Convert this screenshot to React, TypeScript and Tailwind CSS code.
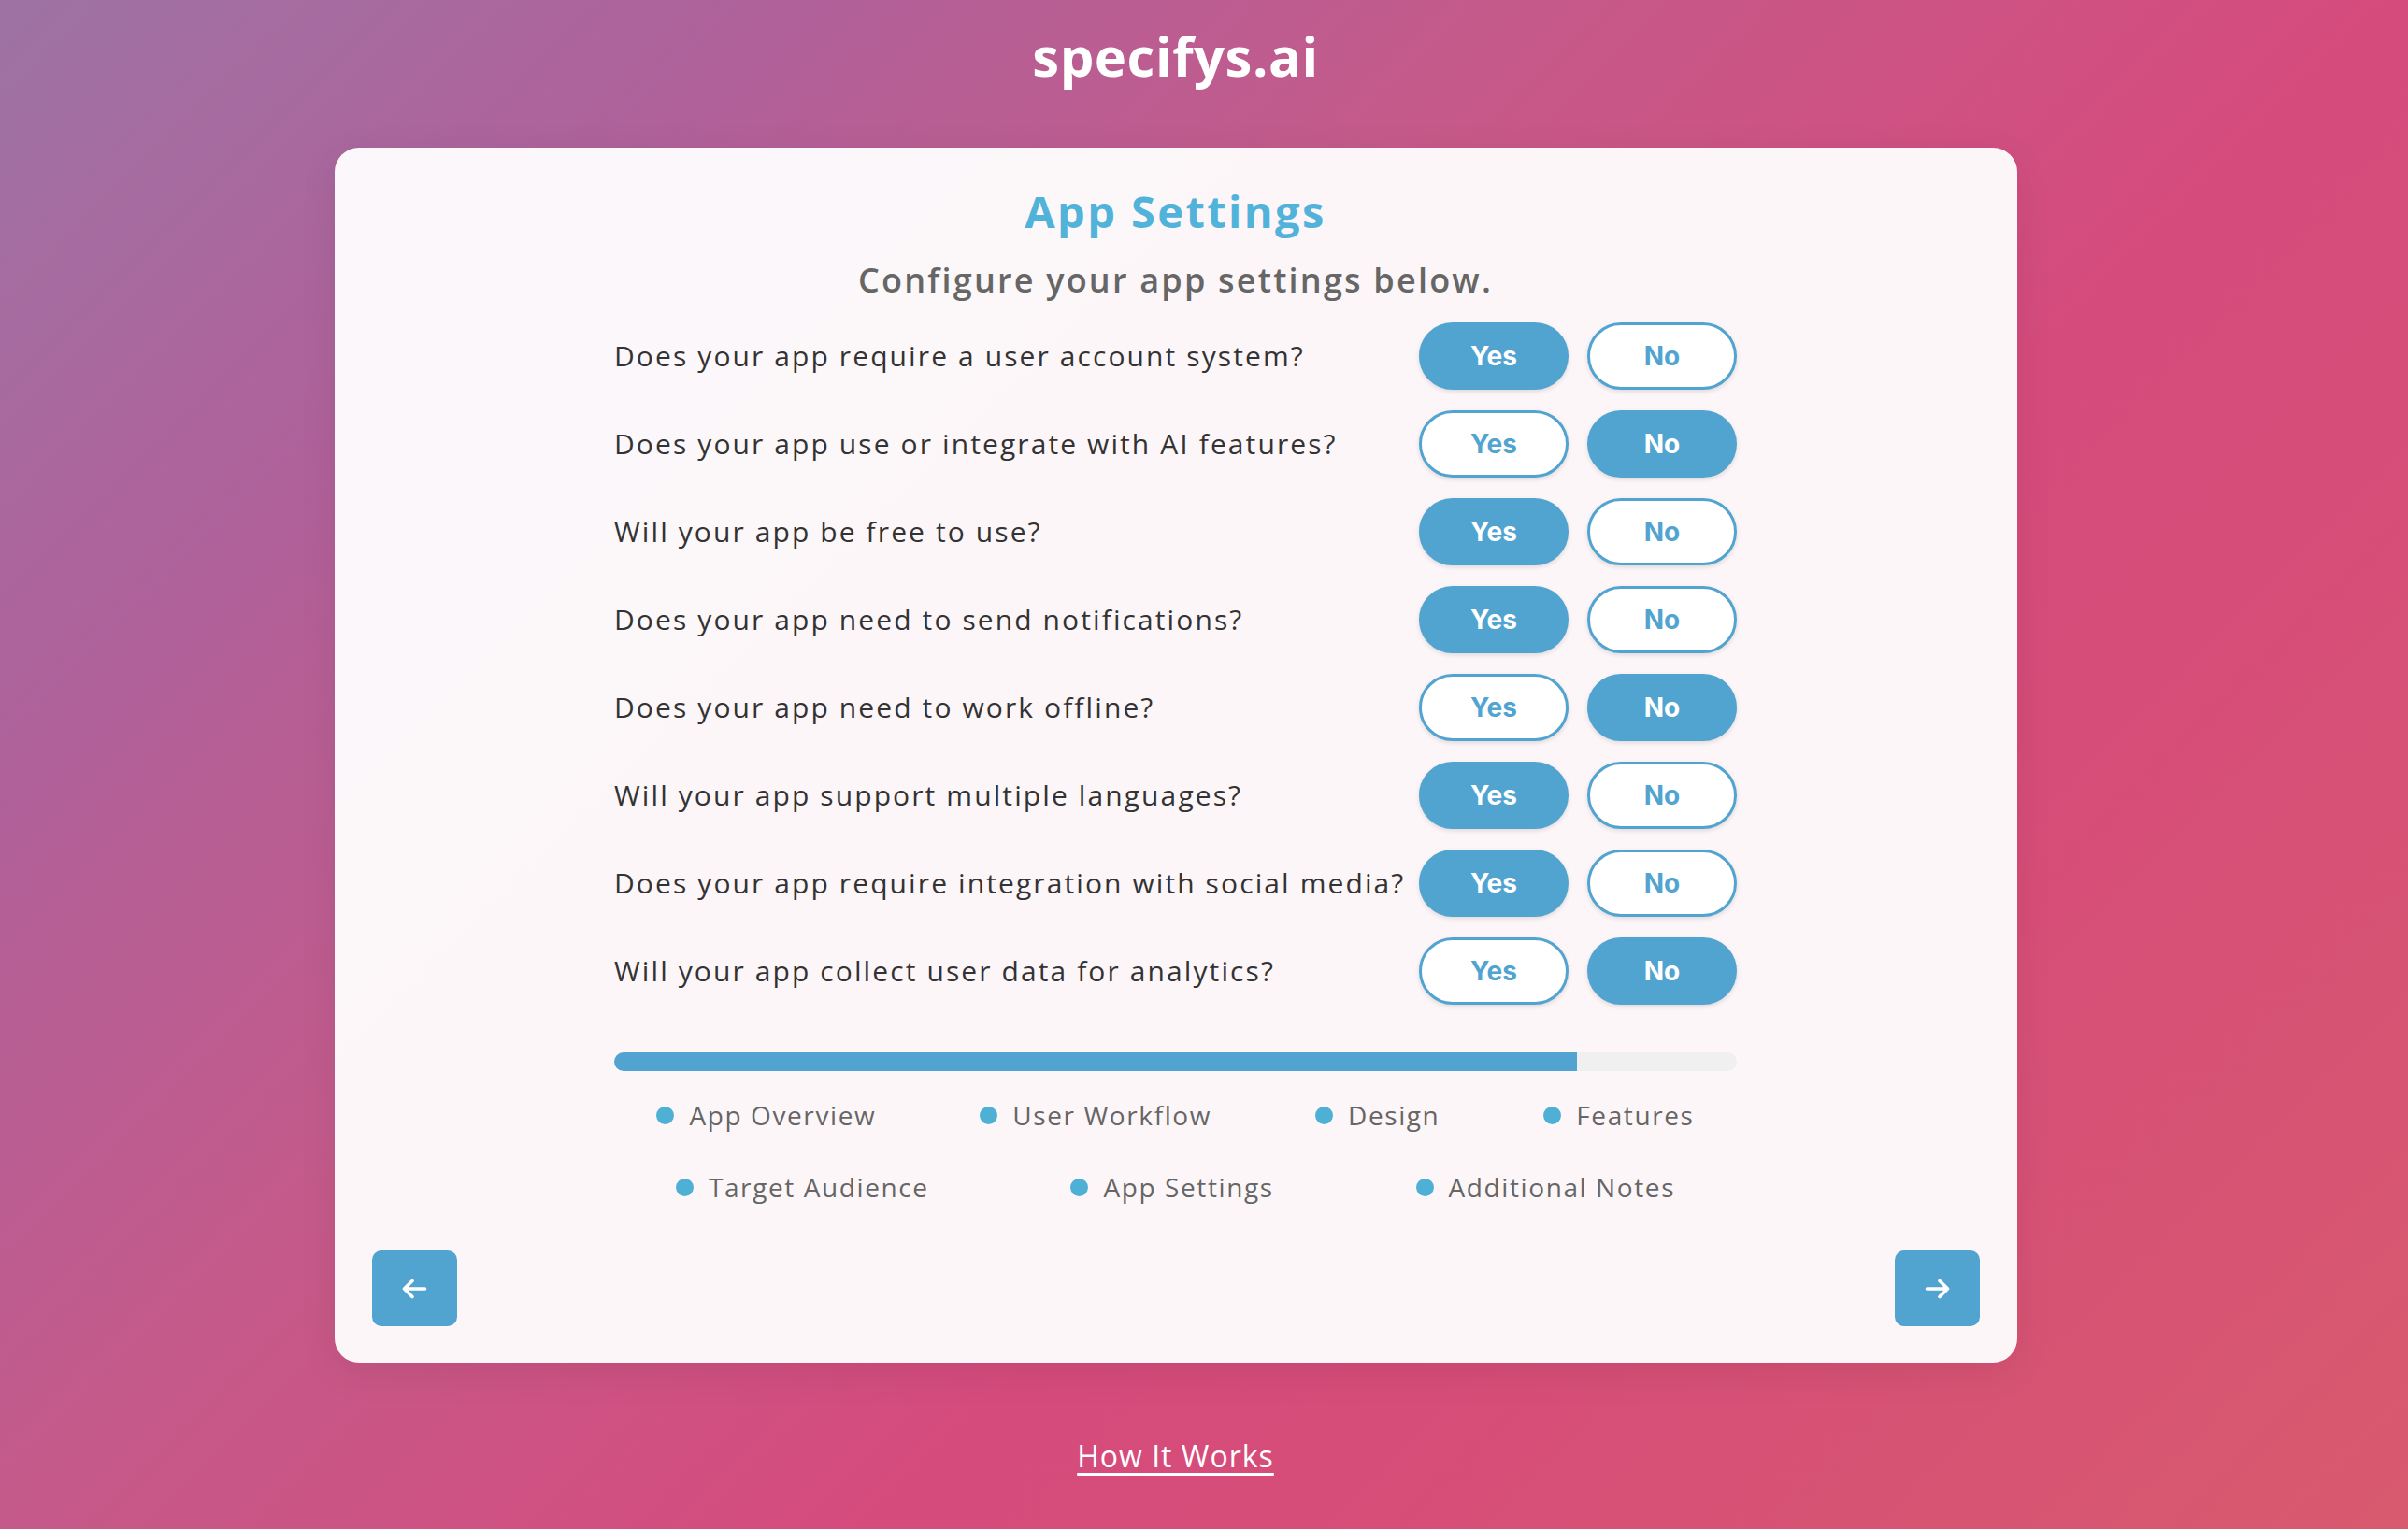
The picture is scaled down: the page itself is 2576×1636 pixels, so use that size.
import { useState } from "react";

const questions = [
  { q: "Does your app require a user account system?", a: "yes" },
  { q: "Does your app use or integrate with AI features?", a: "no" },
  { q: "Will your app be free to use?", a: "yes" },
  { q: "Does your app need to send notifications?", a: "yes" },
  { q: "Does your app need to work offline?", a: "no" },
  { q: "Will your app support multiple languages?", a: "yes" },
  { q: "Does your app require integration with social media?", a: "yes" },
  { q: "Will your app collect user data for analytics?", a: "no" },
];

const stepsTop = ["App Overview", "User Workflow", "Design", "Features"];
const stepsBottom = ["Target Audience", "App Settings", "Additional Notes"];

const sans = "font-['Open_Sans',sans-serif]";

function ChoiceButton({
  label,
  active,
  onClick,
}: {
  label: string;
  active: boolean;
  onClick: () => void;
}) {
  return (
    <button
      type="button"
      onClick={onClick}
      className={
        "h-[72px] w-[160px] rounded-full border-[3px] border-[#52a4d0] font-['Inter',sans-serif] text-[28px] font-bold shadow-[0_2px_5px_rgba(0,0,0,0.12)] " +
        (active ? "bg-[#52a4d0] text-white" : "bg-white text-[#52a4d0]")
      }
    >
      {label}
    </button>
  );
}

function Arrow({ dir }: { dir: "left" | "right" }) {
  return (
    <svg
      width="27"
      height="22"
      viewBox="0 0 27 22"
      fill="none"
      stroke="white"
      strokeWidth="3.6"
      strokeLinecap="round"
      strokeLinejoin="round"
      className={dir === "right" ? "rotate-180" : ""}
    >
      <path d="M11 2.5 2.5 11l8.5 8.5M2.5 11h22" />
    </svg>
  );
}

function Step({ label }: { label: string }) {
  return (
    <div className="flex items-center gap-[16px]">
      <span className="h-[19px] w-[19px] rounded-full bg-[#4fb0d6]" />
      <span
        className={`${sans} text-[28px] leading-[40px] tracking-[1.6px] text-[#666666]`}
      >
        {label}
      </span>
    </div>
  );
}

export default function App() {
  const [answers, setAnswers] = useState(questions.map((x) => x.a));

  const setAnswer = (i: number, v: string) =>
    setAnswers((prev) => prev.map((p, j) => (j === i ? v : p)));

  return (
    <div className="flex min-h-screen w-full flex-col items-center bg-[linear-gradient(135deg,#9e73a4_0%,#b0619a_20%,#c55a8a_39%,#d54b7c_61%,#d64d79_72%,#d85a6e_100%)] pr-[61px]">
      <h1
        className={`${sans} mt-[24px] text-[58px] font-bold leading-[71px] tracking-[0.5px] text-white`}
      >
        specifys.ai
      </h1>

      <div className="mt-[63px] flex w-[1800px] flex-col rounded-[26px] bg-white/95 px-10 pb-[39px] pt-10 shadow-[0_10px_40px_rgba(0,0,0,0.08)]">
        <div className="mx-auto flex w-[1201px] flex-col items-center">
          <h2
            className={`${sans} text-[47px] font-bold leading-[56px] tracking-[2.4px] text-[#51b3d9]`}
          >
            App Settings
          </h2>
          <p
            className={`${sans} mt-[24px] text-[36px] font-semibold leading-[44px] tracking-[2.2px] text-[#666666]`}
          >
            Configure your app settings below.
          </p>

          <div className="mt-[23px] flex w-full flex-col gap-[22px]">
            {questions.map((item, i) => (
              <div key={item.q} className="flex h-[72px] items-center justify-between">
                <span
                  className={`${sans} text-[30px] leading-[40px] tracking-[2.1px] text-[#333333]`}
                >
                  {item.q}
                </span>
                <div className="flex gap-5">
                  <ChoiceButton
                    label="Yes"
                    active={answers[i] === "yes"}
                    onClick={() => setAnswer(i, "yes")}
                  />
                  <ChoiceButton
                    label="No"
                    active={answers[i] === "no"}
                    onClick={() => setAnswer(i, "no")}
                  />
                </div>
              </div>
            ))}
          </div>

          <div className="mt-[51px] h-5 w-full overflow-hidden rounded-full bg-[#f0f0f0]">
            <div className="h-full w-[85.8%] bg-[#52a4d0]" />
          </div>

          <div className="mt-[27px] flex w-full justify-around gap-5">
            {stepsTop.map((s) => (
              <Step key={s} label={s} />
            ))}
          </div>
          <div className="mt-[37px] flex w-full justify-around gap-5">
            {stepsBottom.map((s) => (
              <Step key={s} label={s} />
            ))}
          </div>
        </div>

        <div className="mt-[48px] flex items-center justify-between">
          <button
            type="button"
            className="flex h-[81px] w-[91px] items-center justify-center rounded-[10px] bg-[#52a4d0]"
          >
            <Arrow dir="left" />
          </button>
          <button
            type="button"
            className="flex h-[81px] w-[91px] items-center justify-center rounded-[10px] bg-[#52a4d0]"
          >
            <Arrow dir="right" />
          </button>
        </div>
      </div>

      <a
        href="#"
        className={`${sans} mt-[80px] text-[32px] leading-[40px] tracking-[1px] text-white underline underline-offset-[6px]`}
      >
        How It Works
      </a>
    </div>
  );
}
